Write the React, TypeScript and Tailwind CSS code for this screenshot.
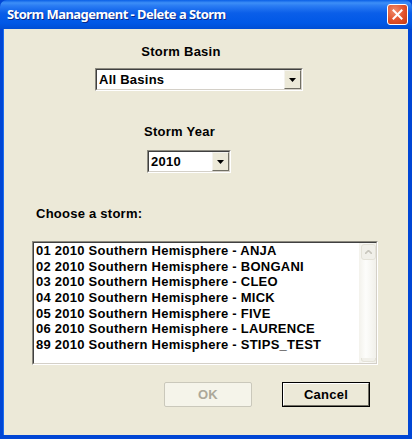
import React from "react";

const font = { fontFamily: '"Liberation Sans", Arial, sans-serif' };

function Arrow() {
  return (
    <svg width="7" height="4" viewBox="0 0 7 4">
      <path d="M0 0h7L3.5 4z" fill="#000" />
    </svg>
  );
}

function Combo({ text, className }: { text: string; className: string }) {
  return (
    <div
      className={`h-[23px] border-t border-l border-t-[#8c8a80] border-l-[#8c8a80] border-b border-r border-b-white border-r-white ${className}`}
    >
      <div className="flex h-full border-t border-l border-t-[#404040] border-l-[#404040] border-b border-r border-b-[#d4d0c8] border-r-[#d4d0c8] bg-white">
        <div className="flex-1 flex items-center pl-[2px] text-[13px] font-bold tracking-[0.25px] text-black leading-none">
          {text}
        </div>
        <div className="w-[17px] h-full flex items-center justify-center bg-[#ece9d8] border-t border-l border-t-[#f4f3ee] border-l-[#f4f3ee] border-b border-r border-b-[#716f64] border-r-[#716f64]">
          <Arrow />
        </div>
      </div>
    </div>
  );
}

const storms = [
  "01 2010 Southern Hemisphere - ANJA",
  "02 2010 Southern Hemisphere - BONGANI",
  "03 2010 Southern Hemisphere - CLEO",
  "04 2010 Southern Hemisphere - MICK",
  "05 2010 Southern Hemisphere - FIVE",
  "06 2010 Southern Hemisphere - LAURENCE",
  "89 2010 Southern Hemisphere - STIPS_TEST",
];

export default function App() {
  return (
    <div className="w-[412px] h-[439px] flex flex-col bg-[#0046d5]" style={font}>
      <div className="h-[29px] shrink-0 flex items-center justify-between pl-[7px] pr-[4px] rounded-t-[7px] bg-[linear-gradient(to_bottom,#0a5fe6_0%,#3d8ff7_10%,#2a7cf3_20%,#0a5ee9_45%,#0058e6_80%,#004ed4_100%)]">
        <span
          className="text-white text-[13px] font-bold tracking-[-0.55px] [text-shadow:1px_1px_0_#0a2a8a]"
          style={{ fontFamily: '"Noto Sans", "Open Sans", sans-serif' }}
        >
          Storm Management - Delete a Storm
        </span>
        <div className="w-[21px] h-[21px] rounded-[3px] border border-white bg-[radial-gradient(circle_at_35%_30%,#f08c6c_0%,#e0502a_55%,#c23a14_100%)] flex items-center justify-center">
          <svg width="11" height="11" viewBox="0 0 11 11">
            <path d="M1.5 1.5l8 8M9.5 1.5l-8 8" stroke="#fff" strokeWidth="2" strokeLinecap="square" />
          </svg>
        </div>
      </div>
      <div className="flex-1 flex ml-[3px] mr-[4px] mb-[4px] bg-[#ece9d8] border-l border-l-[#1a6cf0]">
        <div className="flex-1 flex flex-col items-start pt-[15px] text-black">
          <div className="ml-[91px] w-[172px] text-center text-[13px] font-bold tracking-[0.25px] leading-[16px]">
            Storm Basin
          </div>
          <Combo text="All Basins" className="ml-[91px] mt-[8px] w-[208px]" />
          <div className="ml-[91px] mt-[33px] w-[169px] text-center text-[13px] font-bold tracking-[0.25px] leading-[16px]">
            Storm Year
          </div>
          <Combo text="2010" className="ml-[143px] mt-[10px] w-[84px]" />
          <div className="ml-[32px] mt-[33px] text-[13px] font-bold tracking-[0.25px] leading-[16px]">
            Choose a storm:
          </div>
          <div className="ml-[28px] mt-[19px] w-[346px] h-[124px] border-t border-l border-t-[#8c8a80] border-l-[#8c8a80] border-b border-r border-b-white border-r-white">
            <div className="flex h-full border-t border-l border-t-[#404040] border-l-[#404040] border-b border-r border-b-[#d4d0c8] border-r-[#d4d0c8] bg-white">
              <div className="flex-1 pl-[2px] text-[13px] font-bold tracking-[0.25px] leading-[15.67px]">
                {storms.map((s) => (
                  <div key={s}>{s}</div>
                ))}
              </div>
              <div className="w-[17px] h-full flex flex-col justify-between bg-[linear-gradient(to_right,#f3f2ec,#fdfdfb_40%,#f1f0ea)] pl-[2px] pr-[0px] py-[1px]">
                <div className="h-[16px] rounded-[3px] border border-[#e4e2d8] bg-[#f1f0ea] flex items-center justify-center">
                  <svg width="7" height="4" viewBox="0 0 7 4">
                    <path d="M0 4L3.5 0.5L7 4" stroke="#c8c6bd" strokeWidth="1.6" fill="none" />
                  </svg>
                </div>
                <div className="h-[4px] rounded-b-[3px] border border-t-0 border-[#e4e2d8] bg-[#f1f0ea]" />
              </div>
            </div>
          </div>
          <div className="ml-[160px] mt-[17px] flex gap-[30px]">
            <div className="w-[88px] h-[25px] rounded-[2px] border border-[#cac8bb] bg-[#f5f4ea] flex items-center justify-center text-[13px] font-bold tracking-[0.25px] text-[#aca899]">
              OK
            </div>
            <div className="w-[88px] h-[25px] border border-black bg-[#ece9d8]">
              <div className="w-full h-full border-t border-l border-t-white border-l-white border-b border-r border-b-[#716f64] border-r-[#716f64] flex items-center justify-center text-[13px] font-bold tracking-[0.25px]">
                Cancel
              </div>
            </div>
          </div>
        </div>
      </div>
    </div>
  );
}
